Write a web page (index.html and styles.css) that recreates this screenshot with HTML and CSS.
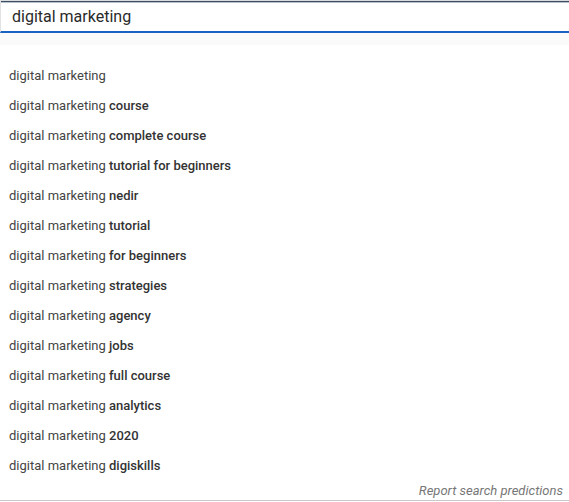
FILE: index.html
```html
<!DOCTYPE html>
<html>
<head>
<meta charset="utf-8">
<link rel="stylesheet" href="styles.css">
</head>
<body>
<div class="panel">
  <div class="search">digital marketing</div>
  <div class="ghost"></div>
  <ul class="list">
    <li>digital marketing</li>
    <li>digital marketing <b>course</b></li>
    <li>digital marketing <b>complete course</b></li>
    <li>digital marketing <b>tutorial for beginners</b></li>
    <li>digital marketing <b>nedir</b></li>
    <li>digital marketing <b>tutorial</b></li>
    <li>digital marketing <b>for beginners</b></li>
    <li>digital marketing <b>strategies</b></li>
    <li>digital marketing <b>agency</b></li>
    <li>digital marketing <b>jobs</b></li>
    <li>digital marketing <b>full course</b></li>
    <li>digital marketing <b>analytics</b></li>
    <li>digital marketing <b>2020</b></li>
    <li>digital marketing <b>digiskills</b></li>
  </ul>
  <div class="footer">Report search predictions</div>
</div>
</body>
</html>
```
FILE: styles.css
```css
html, body {
  margin: 0;
  padding: 0;
  background: #fff;
}
body {
  font-family: Roboto, "Liberation Sans", sans-serif;
  width: 569px;
  height: 502px;
  overflow: hidden;
}
.panel {
  width: 569px;
}
.search {
  box-sizing: border-box;
  height: 33px;
  padding-top: 1px;
  line-height: 31px;
  font-size: 16px;
  color: #2a2a2a;
  padding-left: 11px;
  border-left: 1px solid #e2e2e2;
  border-bottom: 2px solid #1a62c2;
  box-shadow: inset 0 1px 0 #d8dce0, inset 0 2px 0 #3e4d60, inset 0 3px 0 #b9c1cb;
}
.ghost {
  height: 12px;
  background: #fafafa;
}
.list {
  list-style: none;
  margin: 16px 0 0 0;
  padding: 0;
}
.list li {
  height: 30px;
  line-height: 30px;
  font-size: 13px;
  color: #444;
  padding-left: 9px;
  white-space: nowrap;
}
.list b {
  font-weight: 500;
  color: #333;
}
.footer {
  height: 19px;
  line-height: 19px;
  font-size: 13px;
  font-style: italic;
  color: #777;
  text-align: right;
  padding-right: 6px;
  border-bottom: 1px solid #c8c8c8;
}
```
